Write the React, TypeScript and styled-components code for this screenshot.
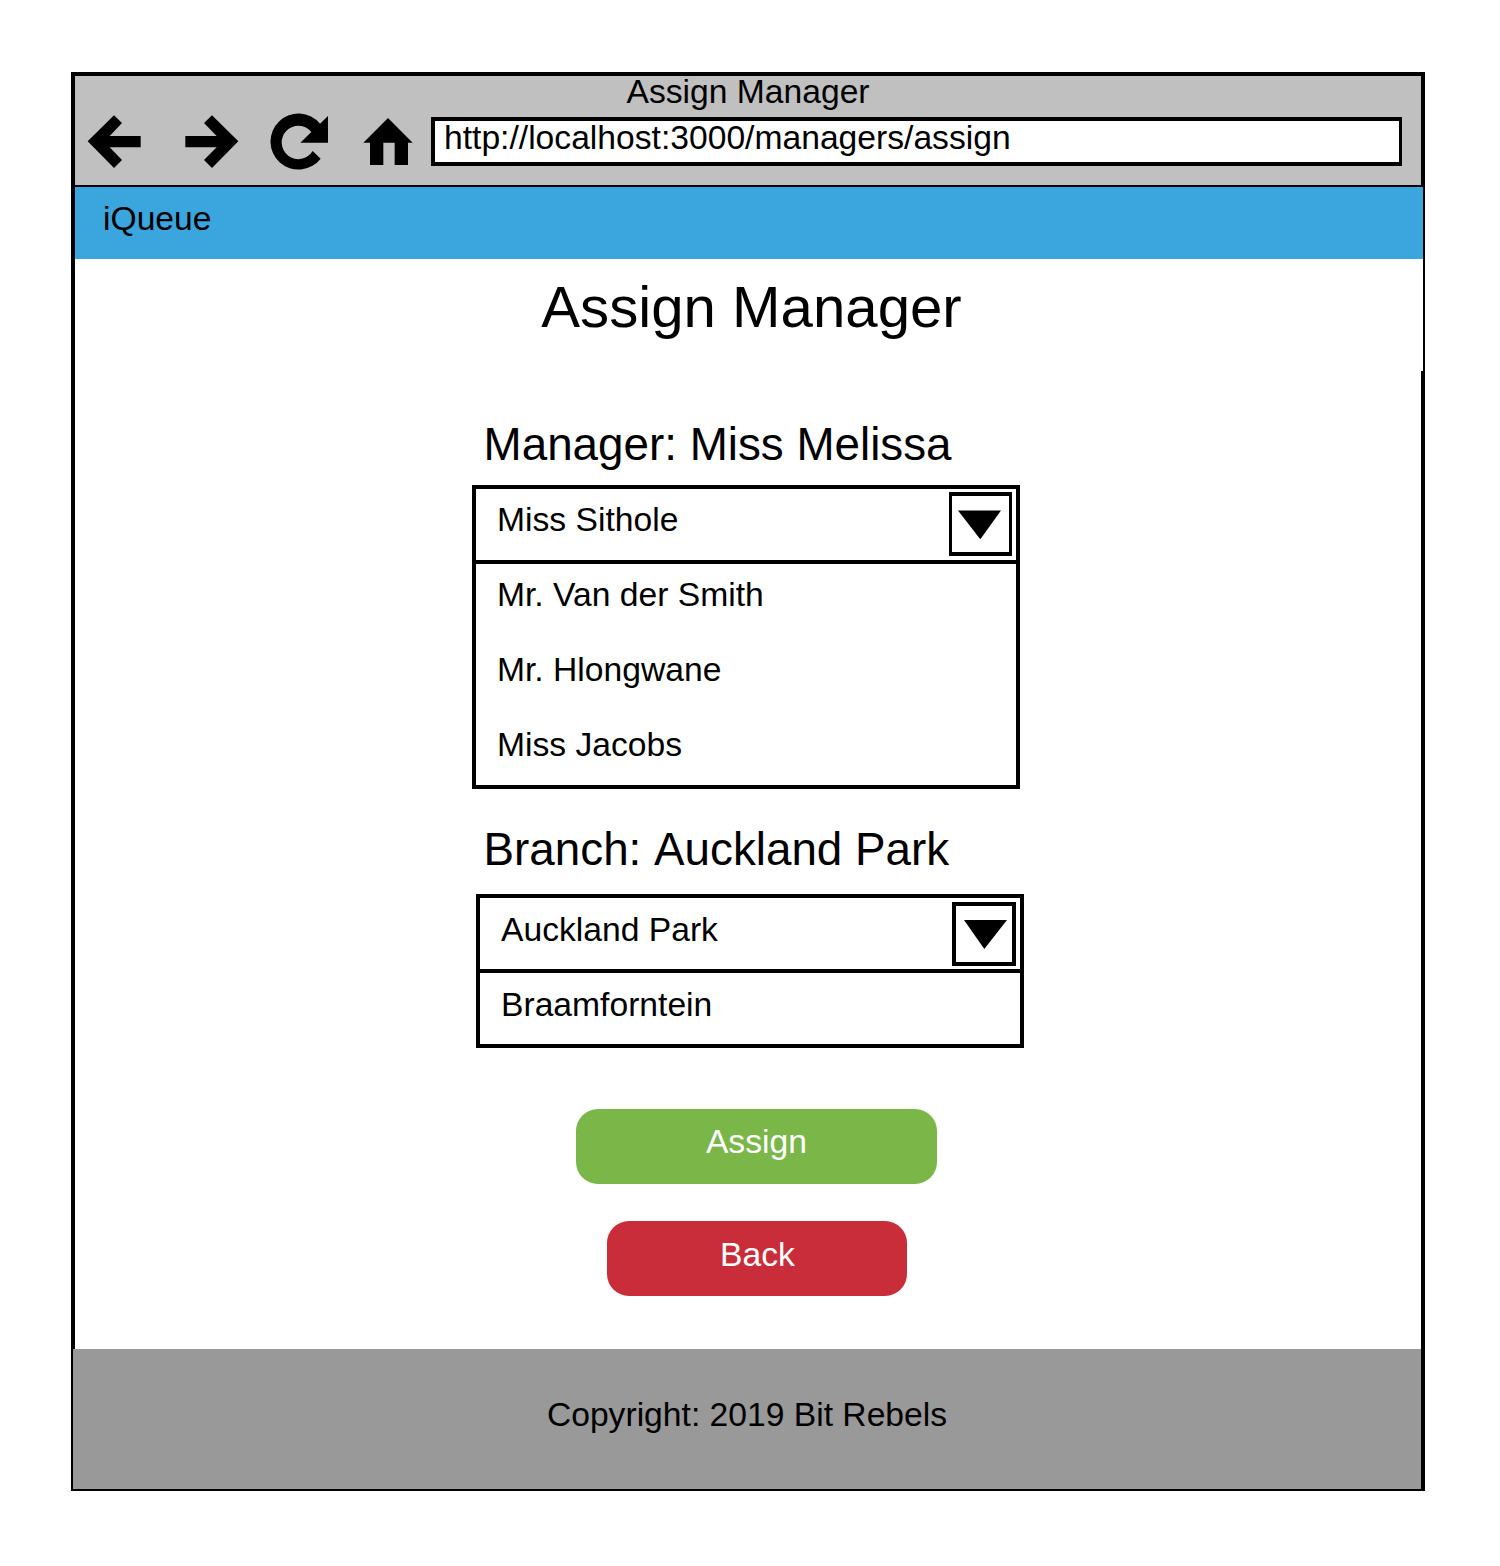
import React from "react";
import styled, { createGlobalStyle } from "styled-components";

const GlobalStyle = createGlobalStyle`
  *, *::before, *::after { box-sizing: border-box; }
  body {
    margin: 0;
    background: #fff;
    color: #000;
    font-family: "Liberation Sans", Arial, sans-serif;
    font-size: 33.65px;
    line-height: 37px;
  }
`;

const Page = styled.div`
  min-height: 1566px;
  padding: 72px 75px 75px 71px;
`;

/* The frame's outline is its black background showing round the panels. */
const BrowserFrame = styled.div`
  display: flex;
  flex-direction: column;
  width: 1354px;
  height: 1419px;
  padding: 4px 4px 2px;
  background: #000;
`;

const Chrome = styled.header`
  height: 109px;
  margin-bottom: 2px;
  background: #c0c0c0;
`;

const WindowTitle = styled.div`
  height: 37px;
  line-height: 31px;
  text-align: center;
`;

const Toolbar = styled.div`
  display: flex;
  align-items: flex-start;
  padding-left: 12px;
`;

const ToolIcon = styled.svg<{ $after: number }>`
  display: block;
  flex: none;
  height: 57px;
  margin-right: ${(p) => p.$after}px;
  fill: #000;
`;

const AddressBar = styled.div`
  width: 971px;
  height: 49px;
  margin-top: 4px;
  padding-left: 9px;
  border: 4px solid #000;
  border-right-width: 3px;
  background: #fff;
  line-height: 33px;
  white-space: nowrap;
`;

const AppBar = styled.nav`
  height: 72px;
  margin-right: -2px;
  padding: 13px 28px 0;
  background: #3ba5de;
`;

const Heading = styled.h1`
  height: 112px;
  margin: 0 -2px 0 0;
  padding: 15px 0 0 5px;
  background: #fff;
  font-size: 58.2px;
  font-weight: 400;
  line-height: 65px;
  text-align: center;
`;

const Content = styled.main`
  display: flex;
  flex: 1;
  flex-direction: column;
  align-items: flex-start;
  padding: 48px 0 0 397px;
  background: #fff;
`;

const FieldLabel = styled.h2<{ $height: number }>`
  height: ${(p) => p.$height}px;
  margin: 0;
  padding-left: 11.6px;
  font-size: 45.78px;
  font-kerning: none;
  font-weight: 400;
  line-height: 52px;
  white-space: nowrap;
`;

const Select = styled.div<{ $indent: number; $after: number }>`
  width: 548px;
  margin: 0 0 ${(p) => p.$after}px ${(p) => p.$indent}px;
  border: 4px solid #000;
`;

const SelectedRow = styled.div<{ $inset: number }>`
  display: flex;
  align-items: flex-start;
  justify-content: space-between;
  height: 75px;
  padding: ${(p) => p.$inset}px 4px 0 21px;
  border-bottom: 4px solid #000;
`;

const SelectedText = styled.span`
  margin-top: 9px;
`;

const ArrowBox = styled.span<{ $thin?: boolean }>`
  flex: none;
  width: ${(p) => (p.$thin ? 63 : 64)}px;
  height: 64px;
  border: solid #000;
  border-width: ${(p) => (p.$thin ? "4px 3px" : "4px")};
`;

const Triangle = styled.svg<{ $left: number }>`
  display: block;
  width: 43px;
  height: 29px;
  margin: 14px 0 0 ${(p) => p.$left}px;
`;

const Option = styled.div<{ $top: number }>`
  height: 75px;
  padding: ${(p) => p.$top}px 21px 0;

  &:last-child { height: 71px; }
`;

const Actions = styled.div`
  display: flex;
  flex-direction: column;
  align-items: center;
  gap: 37.4px;
  width: 362px;
  margin-left: 103.6px;
`;

const ActionButton = styled.button<{ $color: string; $width: number }>`
  width: ${(p) => p.$width}px;
  height: 75px;
  margin-left: ${(p) => (p.$width < 361 ? 1.6 : -0.4)}px;
  padding: 0 0 9px;
  border: 0;
  border-radius: 22px;
  background: ${(p) => p.$color};
  color: #fff;
  font: inherit;
  text-align: center;
`;

const Footer = styled.footer`
  height: 140px;
  margin-left: -2px;
  padding-top: 47px;
  background: #999;
  text-align: center;
`;

type DropdownProps = {
  options: string[];
  indent: number;
  after: number;
  inset: number;
  thin?: boolean;
};

function Dropdown({ options, indent, after, inset, thin }: DropdownProps) {
  const [selected, ...rest] = options;
  return (
    <Select $indent={indent} $after={after}>
      <SelectedRow $inset={inset}>
        <SelectedText>{selected}</SelectedText>
        <ArrowBox $thin={thin}>
          <Triangle $left={thin ? 6 : 8} viewBox="0 0 43 29">
            <path d={thin ? "M0 0.4H43L22.3 29.3Z" : "M0 0H43L20.3 29Z"} />
          </Triangle>
        </ArrowBox>
      </SelectedRow>
      {rest.map((o) => (
        <Option key={o} $top={inset + 9}>{o}</Option>
      ))}
    </Select>
  );
}

export default function App() {
  return (
    <Page>
      <GlobalStyle />
      <BrowserFrame>
        <Chrome>
          <WindowTitle>Assign Manager</WindowTitle>
          <Toolbar>
            <ToolIcon $after={43} width="55" viewBox="81 159 165 171">
              <path d="M83 244L162 166L186 189L149 228H242V262H149L186 300L162 324Z" />
            </ToolIcon>
            <ToolIcon $after={31} width="54" viewBox="375 159 162 171">
              <path d="M535 244L456 166L432 189L470 228H376V262H470L432 300L456 324Z" />
            </ToolIcon>
            <ToolIcon $after={34} width="59" viewBox="630 159 177 171">
              <path d="M782 296A84 84 0 1 1 780 191L804 168V248H721L754 216A50 50 0 1 0 758 273Z" />
            </ToolIcon>
            <ToolIcon $after={18} width="50" viewBox="909 159 150 171">
              <path d="M984 174L1058 248H1044V315H1004V248H970V315H930V248H910Z" />
            </ToolIcon>
            <AddressBar>http://localhost:3000/managers/assign</AddressBar>
          </Toolbar>
        </Chrome>
        <AppBar>iQueue</AppBar>
        <Heading>Assign Manager</Heading>
        <Content>
          <FieldLabel $height={66}>Manager: Miss Melissa</FieldLabel>
          <Dropdown
            options={["Miss Sithole", "Mr. Van der Smith", "Mr. Hlongwane", "Miss Jacobs"]}
            indent={0}
            after={35}
            inset={3}
            thin
          />
          <FieldLabel $height={70}>Branch: Auckland Park</FieldLabel>
          <Dropdown options={["Auckland Park", "Braamforntein"]} indent={4} after={60.8} inset={4} />
          <Actions>
            <ActionButton $color="#7ab648" $width={361.6}>Assign</ActionButton>
            <ActionButton $color="#c92d39" $width={299.8}>Back</ActionButton>
          </Actions>
        </Content>
        <Footer>Copyright: 2019 Bit Rebels</Footer>
      </BrowserFrame>
    </Page>
  );
}
